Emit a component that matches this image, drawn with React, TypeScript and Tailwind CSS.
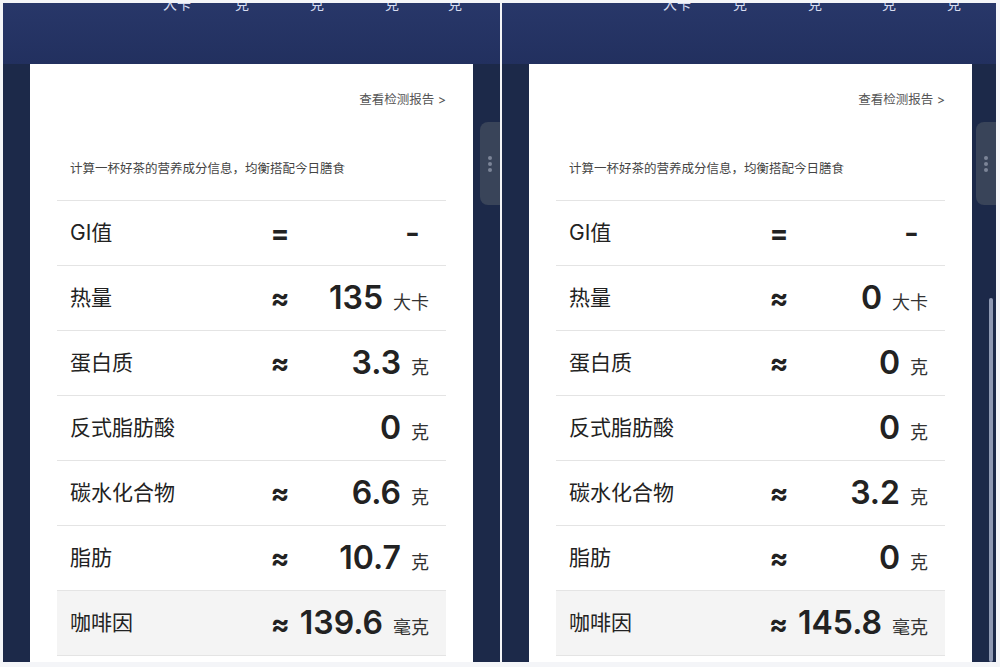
type Row = {
  label: string;
  sign: string;
  value: string;
  unit?: string;
  shaded?: boolean;
};

const left: Row[] = [
  { label: "GI值", sign: "=", value: "-" },
  { label: "热量", sign: "≈", value: "135", unit: "大卡" },
  { label: "蛋白质", sign: "≈", value: "3.3", unit: "克" },
  { label: "反式脂肪酸", sign: "", value: "0", unit: "克" },
  { label: "碳水化合物", sign: "≈", value: "6.6", unit: "克" },
  { label: "脂肪", sign: "≈", value: "10.7", unit: "克" },
  { label: "咖啡因", sign: "≈", value: "139.6", unit: "毫克", shaded: true },
];

const right: Row[] = [
  { label: "GI值", sign: "=", value: "-" },
  { label: "热量", sign: "≈", value: "0", unit: "大卡" },
  { label: "蛋白质", sign: "≈", value: "0", unit: "克" },
  { label: "反式脂肪酸", sign: "", value: "0", unit: "克" },
  { label: "碳水化合物", sign: "≈", value: "3.2", unit: "克" },
  { label: "脂肪", sign: "≈", value: "0", unit: "克" },
  { label: "咖啡因", sign: "≈", value: "145.8", unit: "毫克", shaded: true },
];

function NutritionRow({ row }: { row: Row }) {
  if (row.shaded) {
    return (
      <div className="flex items-center h-[65px] pl-[13px] pr-[17px] border-b border-[#e4e4e4] bg-[#f4f4f4]">
        <div className="text-[21px] text-[#222]">{row.label}</div>
        <div className="flex-1 flex justify-end items-baseline">
          <span className="text-[28px] font-bold text-[#222] mr-[10px]">≈</span>
          <span className="text-[32px] font-semibold text-[#222]">{row.value}</span>
          <span className="text-[18px] text-[#333] ml-[10px]">{row.unit}</span>
        </div>
      </div>
    );
  }
  return (
    <div className="flex items-center h-[65px] pl-[13px] pr-[17px] border-b border-[#e4e4e4]">
      <div className="w-[200px] text-[21px] text-[#222]">{row.label}</div>
      <div className="w-[20px] text-center text-[28px] font-bold text-[#222]">{row.sign}</div>
      <div className="flex-1 flex justify-end items-baseline">
        <span className={`text-[32px] font-semibold text-[#222] ${row.value === "-" ? "mr-[9px]" : ""}`}>
          {row.value}
        </span>
        {row.unit && <span className="text-[18px] text-[#333] ml-[10px]">{row.unit}</span>}
      </div>
    </div>
  );
}

function Panel({ rows, offsets, scrollbar }: { rows: Row[]; offsets: number[]; scrollbar?: boolean }) {
  const units = ["大卡", "克", "克", "克", "克"];
  return (
    <div className="relative h-[659px] flex flex-col bg-[#1c2949] overflow-hidden">
      <div className="h-[61px] shrink-0 bg-gradient-to-b from-[#283769] to-[#22305f] overflow-hidden">
        <div className="flex -mt-[6px] text-[14px] leading-none text-[#d6dcef]">
          {units.map((u, i) => (
            <span key={i} style={{ marginLeft: offsets[i] }}>
              {u}
            </span>
          ))}
        </div>
      </div>
      <div className="flex flex-1">
        <div className="w-[27px] shrink-0" />
        <div className="w-[443px] shrink-0 bg-white px-[27px]">
          <div className="flex justify-end mt-[27px] text-[12.5px] text-[#555]">查看检测报告 &gt;</div>
          <div className="mt-[50px] pl-[13px] text-[12.5px] text-[#444]">计算一杯好茶的营养成分信息，均衡搭配今日膳食</div>
          <div className="mt-[21px] border-t border-[#e4e4e4]">
            {rows.map((r) => (
              <NutritionRow key={r.label} row={r} />
            ))}
          </div>
        </div>
        <div className="flex-1" />
      </div>
      <div className="absolute right-0 top-[119px] w-[20px] h-[83px] rounded-l-[8px] bg-[#394459] flex flex-col items-center justify-center gap-[2px]">
        <span className="w-[4px] h-[4px] rounded-full bg-[#7c8598]" />
        <span className="w-[4px] h-[4px] rounded-full bg-[#7c8598]" />
        <span className="w-[4px] h-[4px] rounded-full bg-[#7c8598]" />
      </div>
      {scrollbar && (
        <div className="absolute right-[3px] top-[295px] bottom-0 w-[4px] rounded-full bg-[#8f99b3]" />
      )}
    </div>
  );
}

export default function App() {
  return (
    <div className="w-[1000px] h-[667px] bg-[#f4f5f8] pt-[3px] pl-[3px] flex gap-[2px] font-['Inter','Noto_Sans_CJK_SC',sans-serif] overflow-hidden">
      <div className="w-[497px]">
        <Panel rows={left} offsets={[160, 44, 61, 61, 49]} />
      </div>
      <div className="w-[494px]">
        <Panel rows={right} offsets={[161, 42, 61, 60, 51]} scrollbar />
      </div>
    </div>
  );
}
